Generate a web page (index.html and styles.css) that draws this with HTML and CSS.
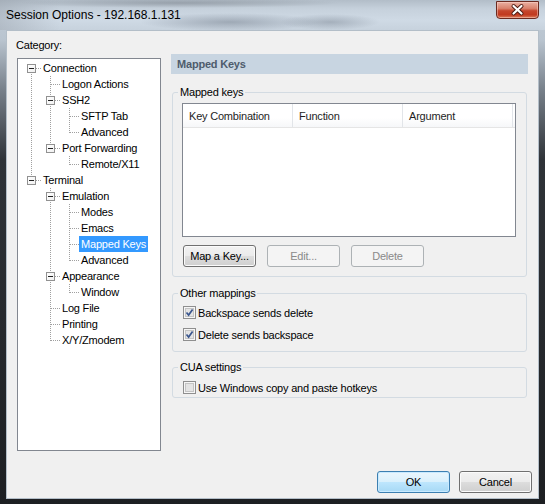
FILE: index.html
```html
<!DOCTYPE html>
<html>
<head>
<meta charset="utf-8">
<title>Session Options</title>
<link rel="stylesheet" href="styles.css">
</head>
<body>
<div class="window">
  <div class="titlebar">
    <span class="title">Session Options - 192.168.1.131</span>
    <div class="close">
      <svg width="43" height="18" viewBox="0 0 43 18">
        <path d="M17.5 5 L25.5 12.5 M25.5 5 L17.5 12.5" stroke="#4a1a12" stroke-width="4" stroke-linecap="round" fill="none"/>
        <path d="M17.5 5 L25.5 12.5 M25.5 5 L17.5 12.5" stroke="#ffffff" stroke-width="2.2" stroke-linecap="round" fill="none"/>
      </svg>
    </div>
  </div>
  <div class="client">
    <div class="main">
      <div class="left">
        <div class="cat-label">Category:</div>
        <div class="tree-box">
          <ul class="tree">
            <li class="root-first">
              <div class="node"><span class="gut"><span class="exp"></span></span><span class="lbl">Connection</span></div>
              <ul>
                <li><div class="node"><span class="gut"></span><span class="lbl">Logon Actions</span></div></li>
                <li>
                  <div class="node"><span class="gut"><span class="exp"></span></span><span class="lbl">SSH2</span></div>
                  <ul>
                    <li><div class="node"><span class="gut"></span><span class="lbl">SFTP Tab</span></div></li>
                    <li><div class="node"><span class="gut"></span><span class="lbl">Advanced</span></div></li>
                  </ul>
                </li>
                <li>
                  <div class="node"><span class="gut"><span class="exp"></span></span><span class="lbl">Port Forwarding</span></div>
                  <ul>
                    <li><div class="node"><span class="gut"></span><span class="lbl">Remote/X11</span></div></li>
                  </ul>
                </li>
              </ul>
            </li>
            <li>
              <div class="node"><span class="gut"><span class="exp"></span></span><span class="lbl">Terminal</span></div>
              <ul>
                <li>
                  <div class="node"><span class="gut"><span class="exp"></span></span><span class="lbl">Emulation</span></div>
                  <ul>
                    <li><div class="node"><span class="gut"></span><span class="lbl">Modes</span></div></li>
                    <li><div class="node"><span class="gut"></span><span class="lbl">Emacs</span></div></li>
                    <li><div class="node"><span class="gut"></span><span class="lbl selected">Mapped Keys</span></div></li>
                    <li><div class="node"><span class="gut"></span><span class="lbl">Advanced</span></div></li>
                  </ul>
                </li>
                <li>
                  <div class="node"><span class="gut"><span class="exp"></span></span><span class="lbl">Appearance</span></div>
                  <ul>
                    <li><div class="node"><span class="gut"></span><span class="lbl">Window</span></div></li>
                  </ul>
                </li>
                <li><div class="node"><span class="gut"></span><span class="lbl">Log File</span></div></li>
                <li><div class="node"><span class="gut"></span><span class="lbl">Printing</span></div></li>
                <li><div class="node"><span class="gut"></span><span class="lbl">X/Y/Zmodem</span></div></li>
              </ul>
            </li>
          </ul>
        </div>
      </div>
      <div class="right">
        <div class="band">Mapped Keys</div>
        <fieldset class="group group-keys">
          <legend>Mapped keys</legend>
          <div class="listview">
            <div class="lv-head">
              <div class="col">Key Combination</div>
              <div class="col">Function</div>
              <div class="col">Argument</div>
            </div>
          </div>
          <div class="btn-row">
            <button class="btn">Map a Key...</button>
            <button class="btn disabled">Edit...</button>
            <button class="btn disabled">Delete</button>
          </div>
        </fieldset>
        <fieldset class="group group-other">
          <legend>Other mappings</legend>
          <div class="check-row">
            <svg class="cb" width="13" height="13" viewBox="0 0 13 13">
              <rect x="0.5" y="0.5" width="12" height="12" fill="#f6f6f6" stroke="#8f8f8f"/>
              <rect x="2.5" y="2.5" width="8" height="8" fill="#e4e4e4" stroke="#c4c4c4"/>
              <path d="M3.5 6.5 L5.6 9 L9.6 3.4" stroke="#3a568e" stroke-width="1.7" fill="none"/>
            </svg>
            <span>Backspace sends delete</span>
          </div>
          <div class="check-row">
            <svg class="cb" width="13" height="13" viewBox="0 0 13 13">
              <rect x="0.5" y="0.5" width="12" height="12" fill="#f6f6f6" stroke="#8f8f8f"/>
              <rect x="2.5" y="2.5" width="8" height="8" fill="#e4e4e4" stroke="#c4c4c4"/>
              <path d="M3.5 6.5 L5.6 9 L9.6 3.4" stroke="#3a568e" stroke-width="1.7" fill="none"/>
            </svg>
            <span>Delete sends backspace</span>
          </div>
        </fieldset>
        <fieldset class="group group-cua">
          <legend>CUA settings</legend>
          <div class="check-row">
            <svg class="cb" width="13" height="13" viewBox="0 0 13 13">
              <rect x="0.5" y="0.5" width="12" height="12" fill="#f6f6f6" stroke="#8f8f8f"/>
              <rect x="2.5" y="2.5" width="8" height="8" fill="#e4e4e4" stroke="#c4c4c4"/>
            </svg>
            <span>Use Windows copy and paste hotkeys</span>
          </div>
        </fieldset>
      </div>
    </div>
    <div class="footer">
      <button class="btn btn-default">OK</button>
      <button class="btn">Cancel</button>
    </div>
  </div>
</div>
</body>
</html>
```

FILE: styles.css
```css
* { box-sizing: border-box; }

html, body {
  margin: 0;
  padding: 0;
}

body {
  width: 545px;
  height: 504px;
  overflow: hidden;
  background: #1b1d20;
  font-family: "Liberation Sans", Arial, sans-serif;
  font-size: 11px;
  letter-spacing: -0.2px;
  color: #000;
}

.window {
  width: 545px;
  height: 504px;
  display: flex;
  flex-direction: column;
  background: linear-gradient(180deg, #c3ced9 0, #b9c4cf 40px, #77808a 90px, #2f3338 160px, #1d1f22 100%);
}

.titlebar {
  height: 30px;
  flex: none;
  display: flex;
  align-items: flex-start;
  padding: 0 6px;
  background:
    radial-gradient(ellipse 90px 9px at 230px 22px, rgba(70, 80, 95, 0.35), transparent),
    radial-gradient(ellipse 50px 8px at 330px 22px, rgba(70, 80, 95, 0.3), transparent),
    radial-gradient(ellipse 160px 5px at 180px 3px, rgba(90, 96, 104, 0.35), transparent),
    linear-gradient(90deg, rgba(150, 158, 168, 0.45) 0, rgba(150, 158, 168, 0) 60px),
    linear-gradient(180deg, #b2bdc8 0, #c6d1dc 9px, #cfdae5 20px, #c7d2dd 30px);
}

.title {
  font-size: 12px;
  letter-spacing: 0;
  line-height: 30px;
  color: #000;
}

.close {
  margin-left: auto;
  margin-top: 1px;
  width: 43px;
  height: 18px;
  border: 1px solid #6b2a20;
  border-radius: 0 0 4px 4px;
  background: linear-gradient(180deg, #eab0a2 0, #d9826d 40%, #c5462d 55%, #c13a20 80%, #dc7f5d 100%);
  box-shadow: inset 0 0 0 1px rgba(255, 220, 210, 0.45);
  overflow: hidden;
}

.close svg {
  display: block;
  margin: -1px 0 0 -1px;
}

.client {
  margin: 0 6px;
  height: 469px;
  border: 1px solid #b3bec8;
  background: #f0f0f0;
  padding: 7px 6px 0 9px;
  display: flex;
  flex-direction: column;
}

.main {
  display: grid;
  grid-template-columns: 146px 357px;
  column-gap: 9px;
  align-items: start;
}

.cat-label {
  line-height: 14px;
  margin-bottom: 6px;
}

.tree-box {
  margin-left: 1px;
  width: 144px;
  height: 393px;
  border: 1px solid #828790;
  background: #fff;
  padding-top: 1px;
  overflow: hidden;
}

.tree, .tree ul {
  list-style: none;
  margin: 0;
  padding: 0;
}

.tree ul {
  padding-left: 19px;
}

.tree li {
  position: relative;
}

.tree li::before {
  content: "";
  position: absolute;
  left: 13px;
  top: 0;
  bottom: 0;
  width: 1px;
  background: repeating-linear-gradient(180deg, #a0a0a0 0 1px, transparent 1px 2px);
}

.tree li:last-child::before {
  bottom: auto;
  height: 9px;
}

.tree li.root-first::before {
  top: 8px;
}

.tree li::after {
  content: "";
  position: absolute;
  left: 14px;
  top: 8px;
  width: 9px;
  height: 1px;
  background: repeating-linear-gradient(90deg, #a0a0a0 0 1px, transparent 1px 2px);
}

.node {
  display: flex;
  height: 16px;
  align-items: center;
}

.gut {
  flex: none;
  width: 23px;
  height: 16px;
  display: flex;
  align-items: flex-start;
}

.exp {
  position: relative;
  z-index: 1;
  margin-left: 9px;
  margin-top: 4px;
  width: 9px;
  height: 9px;
  border: 1px solid #919191;
  background: linear-gradient(135deg, #ffffff 0, #f0f0f0 100%);
}

.exp::before {
  content: "";
  position: absolute;
  left: 1px;
  top: 3px;
  width: 5px;
  height: 1px;
  background: #222;
}

.lbl {
  position: relative;
  z-index: 1;
  padding: 1px 2px;
  line-height: 14px;
  white-space: nowrap;
}

.lbl.selected {
  background: #3399ff;
  color: #fff;
}

.right {
  padding-top: 16px;
}

.band {
  height: 20px;
  background: #c8d5e1;
  padding-left: 6px;
  font-weight: bold;
  line-height: 20px;
  color: #4e5c6c;
}

.group {
  margin: 11px 1px 0;
  min-width: 0;
  border: 1px solid #d3dbe2;
  border-radius: 3px;
  padding: 4px 0 9px 9px;
}

.group legend {
  margin-left: -4px;
  padding: 0 2px;
  line-height: 14px;
  font-size: 11px;
}

.group-other {
  margin-top: 9px;
  padding: 4px 0 8px 9px;
}

.group-cua {
  margin-top: 8px;
  padding: 5px 0 1px 9px;
}

.listview {
  width: 334px;
  height: 134px;
  border: 1px solid #828790;
  background: #fff;
}

.lv-head {
  display: flex;
  height: 24px;
  border-bottom: 1px solid #e5e5e5;
  background: linear-gradient(180deg, #ffffff 0, #ffffff 60%, #f6f7f9 100%);
}

.col {
  width: 110px;
  padding: 2px 0 0 6px;
  line-height: 21px;
  border-right: 1px solid #e2e5e9;
  color: #1e1e1e;
}

.btn-row {
  display: flex;
  gap: 11px;
  margin-top: 8px;
  padding-left: 1px;
}

.btn {
  width: 73px;
  height: 22px;
  padding: 0;
  font: inherit;
  letter-spacing: inherit;
  color: #000;
  border: 1px solid #707070;
  border-radius: 3px;
  background: linear-gradient(180deg, #f2f2f2 0, #ebebeb 50%, #dddddd 50%, #cfcfcf 100%);
  box-shadow: inset 0 0 0 1px #fbfbfb;
}

.btn.disabled {
  border-color: #adb2b5;
  background: #f4f4f4;
  color: #8a8a8a;
  box-shadow: none;
}

.btn.btn-default {
  border-color: #3c7fb1;
  background: linear-gradient(180deg, #eaf6fd 0, #d9f0fc 50%, #bee6fd 50%, #a7d9f5 100%);
  box-shadow: inset 0 0 0 1px #c8eaff;
}

.check-row {
  display: flex;
  align-items: center;
  height: 17px;
  gap: 2px;
  padding-left: 1px;
}

.check-row + .check-row {
  margin-top: 5px;
}

.cb {
  flex: none;
  display: block;
}

.footer {
  display: flex;
  justify-content: flex-end;
  gap: 9px;
  margin-top: 20px;
}
```
